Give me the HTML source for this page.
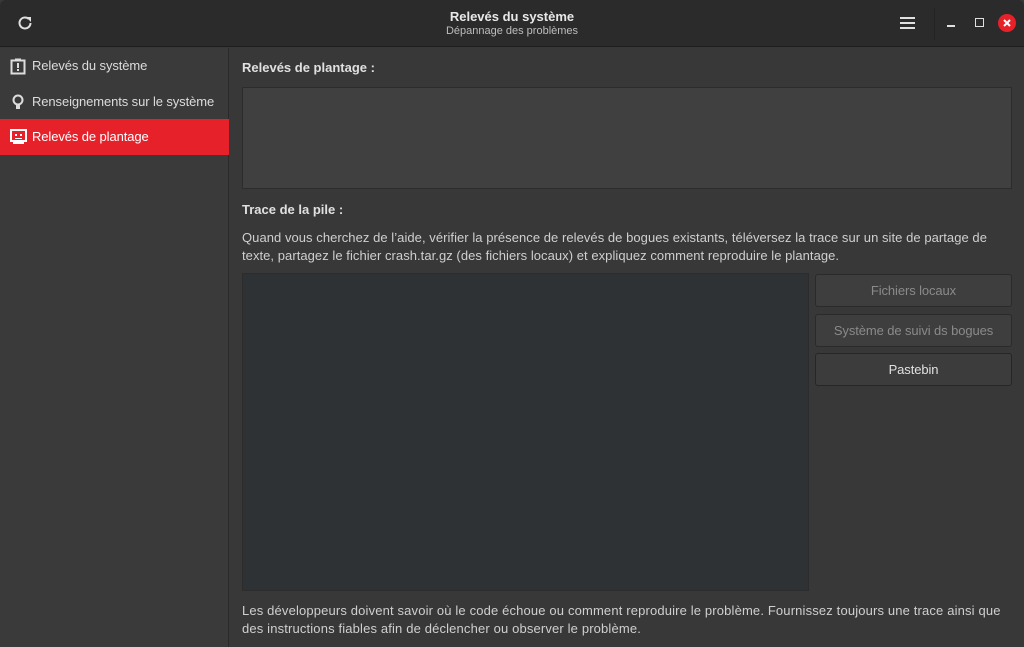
<!DOCTYPE html>
<html><head><meta charset="utf-8"><style>
*{margin:0;padding:0;box-sizing:border-box}
body{width:1024px;height:647px;background:#383838;font-family:"Liberation Sans",sans-serif;font-size:13px;color:#dadada;position:relative;overflow:hidden}
.tb{position:absolute;left:0;top:0;width:1024px;height:47px;background:#2b2b2b;border-bottom:1px solid #1e1e1e;border-radius:6px 6px 0 0}
.title{position:absolute;left:0;width:1024px;text-align:center;top:9px;font-weight:bold;font-size:13px;color:#e8e8e8}
.sub{position:absolute;left:0;width:1024px;text-align:center;top:25px;font-size:11px;color:#bdbdbd}
.side{position:absolute;left:0;top:48px;width:229px;height:599px;background:#3a3a3a;border-right:1px solid #2a2a2a}
.item{position:absolute;left:0;width:229px;height:36px;line-height:36px;padding-left:32px;font-size:13px;color:#dcdcdc;letter-spacing:-0.1px}
.sel{background:#e6212a;color:#fff}
.ico{position:absolute;left:10px;top:10px}
.main{position:absolute;left:230px;top:48px;right:0;bottom:0;background:#383838}
.lbl{position:absolute;left:12px;font-weight:bold;font-size:13px;color:#e0e0e0}
.p{position:absolute;left:12px;width:780px;font-size:13px;line-height:18px;color:#cfcfcf;white-space:nowrap}
.box{position:absolute;border:1px solid #2c2c2c}
.btn{position:absolute;left:585px;width:197px;height:33px;border:1px solid #2a2a2a;border-radius:3px;background:#3e3e3e;text-align:center;line-height:31px;color:#8a8a8a;font-size:13px;letter-spacing:-0.1px}
</style></head><body>
<div class="tb">
<svg style="position:absolute;left:16px;top:14px" width="18" height="18" viewBox="0 0 18 18"><path d="M14.5 9a5.5 5.5 0 1 1-1.8-4.1" fill="none" stroke="#e0e0e0" stroke-width="2"/><path d="M10 3h5v5z" fill="#e0e0e0"/></svg>
<div class="title">Relevés du système</div>
<div class="sub">Dépannage des problèmes</div>
<svg style="position:absolute;left:900px;top:16px" width="16" height="14"><rect y="1" width="15" height="2" fill="#e0e0e0"/><rect y="6" width="15" height="2" fill="#e0e0e0"/><rect y="11" width="15" height="2" fill="#e0e0e0"/></svg>
<div style="position:absolute;left:934px;top:8px;width:1px;height:32px;background:#222"></div>
<div style="position:absolute;left:947px;top:25px;width:8px;height:1.5px;background:#e0e0e0"></div>
<div style="position:absolute;left:975px;top:18px;width:9px;height:9px;border:1.5px solid #e0e0e0"></div>
<div style="position:absolute;left:998px;top:14px;width:18px;height:18px;border-radius:50%;background:#e6212a"></div>
<svg style="position:absolute;left:1002px;top:18px" width="10" height="10"><path d="M2 2l6 6M8 2l-6 6" stroke="#fff" stroke-width="2"/></svg>
</div>
<div class="side">
<div class="item" style="top:0">
<svg class="ico" width="16" height="17"><rect x="1.5" y="2.5" width="13" height="13" fill="none" stroke="#ddd" stroke-width="2"/><rect x="5" y="0.5" width="6" height="3" fill="#ddd"/><rect x="7" y="5" width="2" height="5" fill="#ddd"/><rect x="7" y="11" width="2" height="2" fill="#ddd"/></svg>Relevés du système</div>
<div class="item" style="top:36px">
<svg class="ico" width="16" height="17"><circle cx="8" cy="6" r="4.5" fill="none" stroke="#ddd" stroke-width="2"/><rect x="6" y="11" width="4" height="4" fill="#ddd"/></svg>Renseignements sur le système</div>
<div class="item sel" style="top:71px">
<svg class="ico" width="17" height="16"><rect x="1" y="1" width="15" height="11" fill="none" stroke="#fff" stroke-width="2"/><rect x="3" y="13" width="11" height="2" fill="#fff"/><rect x="5" y="5" width="2" height="2" fill="#fff"/><rect x="10" y="5" width="2" height="2" fill="#fff"/><rect x="5" y="9" width="7" height="1" fill="#fff"/></svg>Relevés de plantage</div>
</div>
<div class="main">
<div class="lbl" style="top:12px">Relevés de plantage :</div>
<div class="box" style="left:12px;top:39px;width:770px;height:102px;background:#404040"></div>
<div class="lbl" style="top:154px">Trace de la pile :</div>
<div class="p" style="top:181px;letter-spacing:0.05px">Quand vous cherchez de l’aide, vérifier la présence de relevés de bogues existants, téléversez la trace sur un site de partage de<br>texte, partagez le fichier crash.tar.gz (des fichiers locaux) et expliquez comment reproduire le plantage.</div>
<div class="box" style="left:12px;top:225px;width:567px;height:318px;background:#2e3234"></div>
<div class="btn" style="top:226px">Fichiers locaux</div>
<div class="btn" style="top:266px">Système de suivi ds bogues</div>
<div class="btn" style="top:305px;color:#e0e0e0;background:#3c3c3c;border-color:#262626">Pastebin</div>
<div class="p" style="top:554px;letter-spacing:0.15px">Les développeurs doivent savoir où le code échoue ou comment reproduire le problème. Fournissez toujours une trace ainsi que<br>des instructions fiables afin de déclencher ou observer le problème.</div>
</div>
</body></html>
